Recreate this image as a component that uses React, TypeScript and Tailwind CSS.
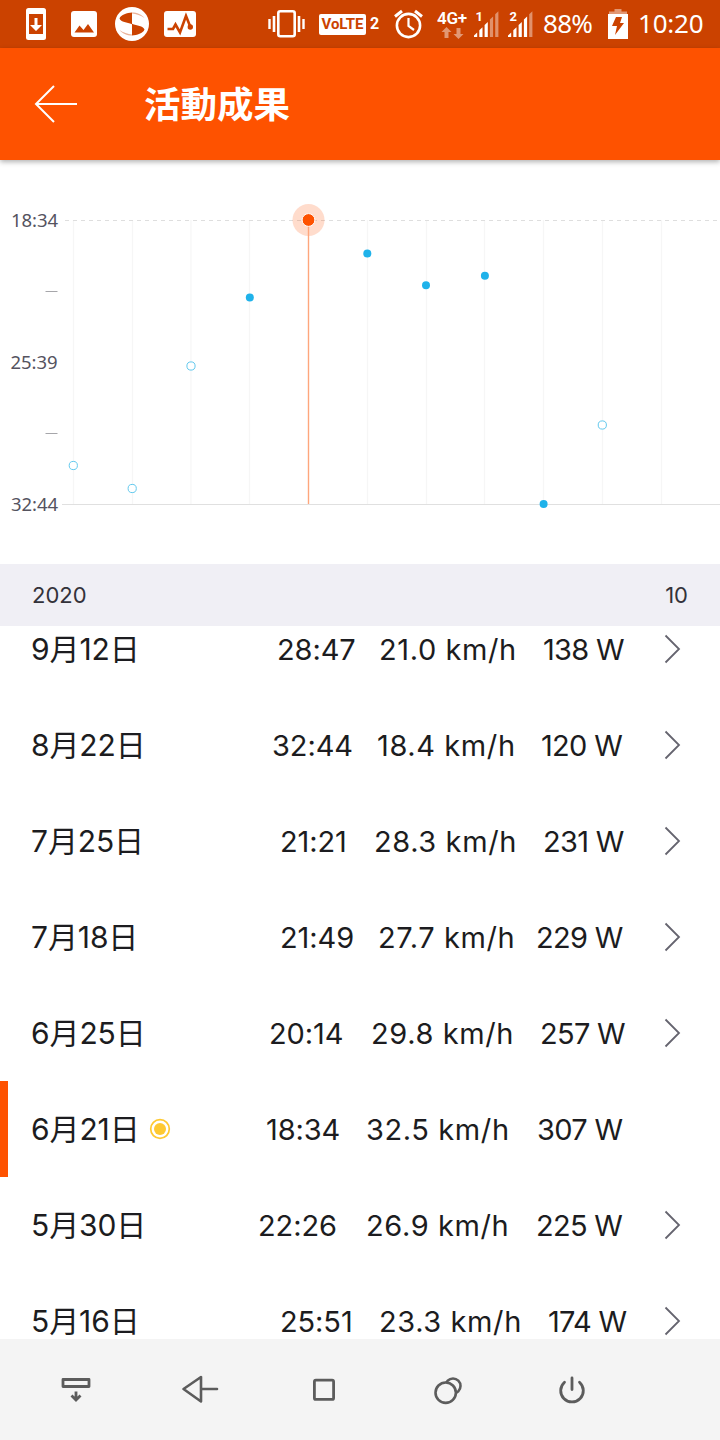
import React from 'react'
import clsx from 'clsx'

type Effort = {
  date: string
  time: string
  speed: string
  power: string
  cols: string
  best?: boolean
}

const efforts: Effort[] = [
  { date: '9月12日', time: '28:47', speed: '21.0 km/h', power: '138 W', cols: 'grid-cols-[76px_138px_80px]' },
  { date: '8月22日', time: '32:44', speed: '18.4 km/h', power: '120 W', cols: 'grid-cols-[79px_138px_82px]' },
  { date: '7月25日', time: '21:21', speed: '28.3 km/h', power: '231 W', cols: 'grid-cols-[68px_143px_80px]' },
  { date: '7月18日', time: '21:49', speed: '27.7 km/h', power: '229 W', cols: 'grid-cols-[72px_132px_87px]' },
  { date: '6月25日', time: '20:14', speed: '29.8 km/h', power: '257 W', cols: 'grid-cols-[76px_143px_83px]' },
  { date: '6月21日', time: '18:34', speed: '32.5 km/h', power: '307 W', cols: 'grid-cols-[74px_145px_85px]', best: true },
  { date: '5月30日', time: '22:26', speed: '26.9 km/h', power: '225 W', cols: 'grid-cols-[82px_144px_87px]' },
  { date: '5月16日', time: '25:51', speed: '23.3 km/h', power: '174 W', cols: 'grid-cols-[73px_143px_75px]' },
]

const gridLines = [73.5, 132.5, 191, 249.5, 367.5, 426.5, 484.5, 543.5, 602.5, 661.5]

const points = [
  { x: 73.3, y: 305.5, open: true },
  { x: 132.2, y: 328.5, open: true },
  { x: 191, y: 206, open: true },
  { x: 249.8, y: 137.5, open: false },
  { x: 367.3, y: 93.5, open: false },
  { x: 426, y: 125.3, open: false },
  { x: 484.9, y: 115.8, open: false },
  { x: 543.6, y: 344, open: false },
  { x: 602.3, y: 265, open: true },
]

const Signal = ({ sim, level }: { sim: string; level: number }) => (
  <svg width="26" height="48" viewBox="0 0 26 48" className="shrink-0">
    <text x="2.500" y="20.500" fontSize="13" fontWeight="700" fill="#fff" className="font-['Roboto',sans-serif]">{sim}</text>
    {[0, 1, 2, 3, 4].map((i) => (
      <path
        key={i}
        d={`M${1 + i * 5.3} 37V${35.5 - i * 5.3}L${4.2 + i * 5.3} ${32.5 - i * 5.3}V37Z`}
        fill="#fff"
        opacity={i < level ? 1 : 0.42}
      />
    ))}
  </svg>
)

const StatusBar = () => (
  <div className="flex h-12 items-center bg-[#cb4200] text-white">
    <svg width="20" height="32" viewBox="0 0 20 32" className="ml-[26px]">
      <rect width="20" height="32" rx="2.500" fill="#fff" />
      <rect x="3" y="6" width="14" height="20" fill="#cb4200" />
      <path d="M8.500 10h3v7h4.500L10 23l-6-6h4.500z" fill="#fff" />
    </svg>
    <svg width="26" height="26" viewBox="0 0 26 26" className="ml-[25px]">
      <rect width="26" height="26" rx="3" fill="#fff" />
      <path d="M3.500 21.500l5-7 4 4.500 4.500-6 6 8.500z" fill="#cb4200" />
    </svg>
    <svg width="34" height="34" viewBox="0 0 34 34" className="ml-[18px]">
      <circle cx="17" cy="17" r="17" fill="#fff" />
      <g fill="#cb4200">
        <path d="M17 5.500C12 6 6 7.500 4.500 11.500C6 15.500 12 15 17 17.200Z" />
        <path d="M17 5.500C22 5.500 27 7.500 29.500 11C26 8.500 21 7 17 6.500Z" opacity=".4" />
      </g>
      <g fill="#cb4200" transform="rotate(180 17 17)">
        <path d="M17 5.500C12 6 6 7.500 4.500 11.500C6 15.500 12 15 17 17.200Z" />
        <path d="M17 5.500C22 5.500 27 7.500 29.500 11C26 8.500 21 7 17 6.500Z" opacity=".4" />
      </g>
    </svg>
    <svg width="32" height="26" viewBox="0 0 32 26" className="ml-[15px]">
      <rect width="32" height="26" rx="3" fill="#fff" />
      <path d="M3.500 18H9l2.500-4.500L16 21.500 22 5l4 10" fill="none" stroke="#cb4200" strokeWidth="2.600" />
      <circle cx="26.300" cy="16" r="2.700" fill="#cb4200" />
    </svg>

    <svg width="38" height="28" viewBox="0 0 38 28" className="ml-[72px]" fill="none" stroke="#fff">
      <rect x="10.300" y="1.300" width="16.400" height="25" rx="2" strokeWidth="2.600" />
      <path d="M6 6v16M31 6v16" strokeWidth="2.600" />
      <path d="M1.500 9v10M35.500 9v10" strokeWidth="2.400" />
    </svg>
    <div className="ml-[13px] flex h-[21px] w-[47px] items-center justify-center rounded-[2px] bg-white pt-px font-['Roboto',sans-serif] text-[15px] font-bold text-[#cb4200]">
      VoLTE
    </div>
    <span className="ml-[4px] w-[10px] font-['Roboto',sans-serif] text-[16px] font-bold leading-none">2</span>
    <svg width="30" height="30" viewBox="0 0 30 30" className="ml-[14px]" fill="none" stroke="#fff">
      <circle cx="14.500" cy="16.500" r="11.600" strokeWidth="2.600" />
      <path d="M1 7.500L8 2M21 2l7 5.500" strokeWidth="3" />
      <path d="M14.500 9v8l5.500 4" strokeWidth="2.200" />
    </svg>
    <svg width="32" height="48" viewBox="0 0 32 48" className="ml-[12px]">
      <text x="1" y="24" fontSize="17" fontWeight="600" fill="#fff" textLength="30" className="font-['Roboto',sans-serif]">4G+</text>
      <path d="M10.500 27l5 5h-3v6h-4v-6h-3z" fill="#fff" opacity=".45" />
      <path d="M22.500 39l5-5h-3v-6h-4v6h-3z" fill="#fff" opacity=".45" />
    </svg>
    <div className="ml-[5px] flex">
      <Signal sim="1" level={3} />
    </div>
    <div className="ml-[8px] flex">
      <Signal sim="2" level={4} />
    </div>
    <span className="ml-[10px] w-[51px] whitespace-nowrap pb-[2px] font-['Noto_Sans','Open_Sans',sans-serif] text-[26px] tracking-[-0.7px]">88%</span>
    <svg width="20" height="30" viewBox="0 0 20 30" className="ml-[14px]">
      <path d="M6.500 0h7v2.500H19V5H1V2.500h5.500z" fill="#fff" opacity=".45" />
      <path d="M0 5h20v25H0z" fill="#fff" />
      <path d="M8 8h6l-2 6h4L7 26l2-9H4z" fill="#cb4200" />
    </svg>
    <span className="ml-[10px] whitespace-nowrap pb-[2px] font-['Noto_Sans','Open_Sans',sans-serif] text-[26px] tracking-[-0.2px]">10:20</span>
  </div>
)

const Header = () => (
  <div className="relative z-10 flex h-28 items-center bg-[#fe5200] shadow-[0_2px_5px_rgba(0,0,0,0.3)]">
    <svg width="44" height="38" viewBox="0 0 44 38" className="ml-[34px]" fill="none" stroke="#fff" strokeWidth="2">
      <path d="M43 19H2M20 1L2 19l18 18" />
    </svg>
    <h1 className="ml-[66px] pb-[2px] font-['Noto_Sans_CJK_TC',sans-serif] text-[36.5px] font-bold leading-none text-white">活動成果</h1>
  </div>
)

const Chart = () => (
  <svg width="720" height="404" viewBox="0 0 720 404" className="block">
    {gridLines.map((x) => (
      <line key={x} x1={x} x2={x} y1="60" y2="344" stroke="#f6f6f6" strokeWidth="1.200" />
    ))}
    <line x1="65" x2="720" y1="60.500" y2="60.500" stroke="#dedede" strokeDasharray="4 4" />
    <line x1="62" x2="720" y1="344.500" y2="344.500" stroke="#e0e0e0" />
    <path d="M45.500 131.500h12M45.500 273.500h12" stroke="#a6a6aa" />
    <g fill="#55535f" fontSize="18.500" className="font-['Noto_Sans',sans-serif]">
      <text x="11" y="67" textLength="47">18:34</text>
      <text x="10.500" y="209" textLength="47">25:39</text>
      <text x="11" y="351" textLength="47">32:44</text>
    </g>
    <circle cx="308.500" cy="60" r="16" fill="#fe5200" opacity=".2" />
    <line x1="308.500" x2="308.500" y1="60" y2="344" stroke="#fea67c" strokeWidth="1.400" />
    <circle cx="308.500" cy="60" r="6.400" fill="#fe5200" stroke="#fff" />
    {points.map((p) => (
      <circle
        key={p.x}
        cx={p.x}
        cy={p.y}
        r={p.open ? 4.1 : 4}
        fill={p.open ? '#fff' : '#1fb2ea'}
        stroke={p.open ? '#62c9ee' : 'none'}
      />
    ))}
  </svg>
)

const EffortRow = ({ date, time, speed, power, cols, best }: Effort) => (
  <div
    className={clsx(
      'flex h-24 shrink-0 items-center border-l-8 pl-[23px] text-[#1c1c20]',
      best ? 'border-[#fe5200]' : 'border-transparent'
    )}
  >
    <span className="pt-px text-[30px] tracking-[-0.1px]">{date}</span>
    {best && (
      <svg width="22" height="22" viewBox="0 0 22 22" className="ml-[9px]">
        <circle cx="11" cy="11" r="9.300" fill="none" stroke="#fec931" strokeWidth="1.700" />
        <circle cx="11" cy="11" r="6" fill="#fec931" />
      </svg>
    )}
    <div className={clsx('ml-auto mr-[98px] grid gap-[26px] whitespace-nowrap pt-[2px] text-[29px]', cols)}>
      <span className="tracking-[-0.1px]">{time}</span>
      <span className="tracking-[0.6px]">{speed}</span>
      <span className="tracking-[-0.7px]">{power}</span>
    </div>
    {!best && (
      <svg width="17" height="30" viewBox="0 0 17 30" className="-ml-[57px] mr-[39px]" fill="none" stroke="#65646f" strokeWidth="1.800">
        <path d="M1.500 1.500L15 15 1.500 28.500" />
      </svg>
    )}
  </div>
)

const NavBar = () => (
  <div className="flex h-[101px] shrink-0 items-center bg-[#f4f4f4] pl-[14px]">
    <div className="flex w-[124px] justify-center">
      <svg width="40" height="40" viewBox="0 0 40 40" fill="none" stroke="#5c5c5c" strokeWidth="2.800">
        <path d="M7 9.500h26v7H7z" strokeLinejoin="round" />
        <path d="M20 21.500v8M15.500 25.500l4.500 4.500 4.500-4.500" />
      </svg>
    </div>
    <div className="flex w-[124px] justify-center">
      <svg width="40" height="40" viewBox="0 0 40 40" fill="none" stroke="#5c5c5c" strokeWidth="2.600" strokeLinejoin="round" strokeLinecap="round">
        <path d="M3.500 19L21 7v24.500zM21 19h16" />
      </svg>
    </div>
    <div className="flex w-[124px] justify-center">
      <svg width="40" height="40" viewBox="0 0 40 40" fill="none" stroke="#5c5c5c" strokeWidth="2.800">
        <rect x="10.400" y="10.200" width="19.200" height="19.200" rx="1.500" />
      </svg>
    </div>
    <div className="flex w-[124px] justify-center">
      <svg width="40" height="40" viewBox="0 0 40 40" stroke="#5c5c5c" strokeWidth="2.600">
        <circle cx="25" cy="16" r="7.500" fill="none" />
        <circle cx="17.700" cy="22.700" r="10.200" fill="#f4f4f4" />
      </svg>
    </div>
    <div className="flex w-[124px] justify-center">
      <svg width="40" height="40" viewBox="0 0 40 40" fill="none" stroke="#5c5c5c" strokeWidth="2.800" strokeLinecap="round">
        <path d="M12.500 12.200a11.300 11.300 0 1 0 15 0M20 8v11.500" />
      </svg>
    </div>
  </div>
)

const App = () => {
  return (
    <div className="flex h-[1440px] w-[720px] flex-col overflow-hidden bg-white font-['Inter','Noto_Sans_CJK_TC',sans-serif]">
      <StatusBar />
      <Header />
      <Chart />
      <div className="flex h-[62px] shrink-0 items-center justify-between bg-[#f0eff5] px-8 text-[22px] text-[#33323a]">
        <span>2020</span>
        <span>10</span>
      </div>
      <div className="flex min-h-0 flex-1 flex-col overflow-hidden">
        {/* list is scrolled a little under the year header */}
        <div className="-mt-[25px] flex flex-col">
          {efforts.map((effort) => (
            <EffortRow key={effort.date} {...effort} />
          ))}
        </div>
      </div>
      <NavBar />
    </div>
  )
}

export default App
